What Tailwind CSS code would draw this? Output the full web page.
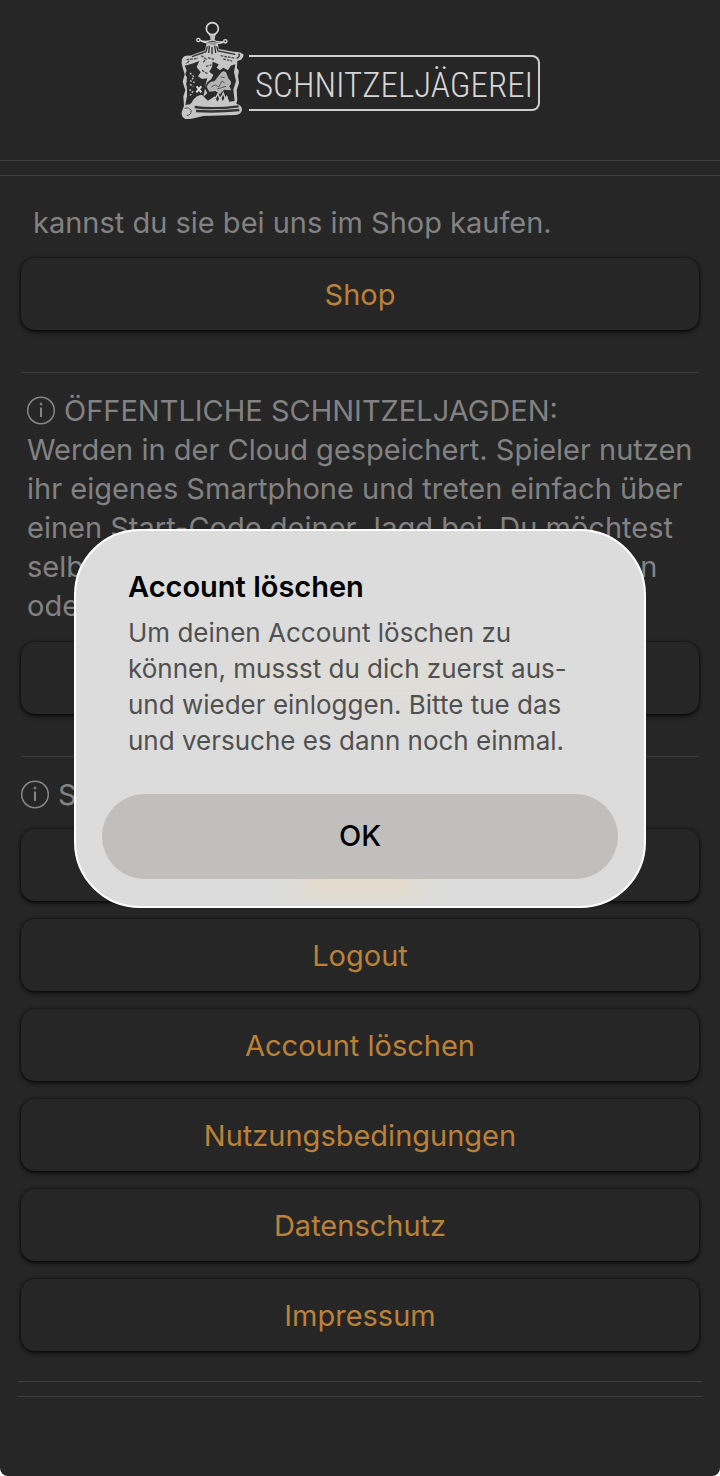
<!DOCTYPE html>
<html lang="de" class="bg-white">
<head>
  <meta charset="UTF-8">
  <meta name="viewport" content="width=device-width, initial-scale=1.0">
  <title>Schnitzeljägerei - Account</title>
  <script src="https://cdn.jsdelivr.net/npm/@tailwindcss/browser@4"></script>
  <style>
    body { font-family: Inter, 'Liberation Sans', sans-serif; }
    .logo-text { font-family: 'Roboto Condensed', 'Open Sans Condensed', 'Liberation Sans Narrow', Roboto, sans-serif; }
    .menu-btn {
      box-shadow: 0 2px 5px rgba(0,0,0,0.75), 0 0 3px rgba(0,0,0,0.6);
    }
  </style>
</head>
<body>
  <div class="min-h-screen rounded-b-lg bg-[#262626] text-[29px] leading-[39px] text-[#828282]">

    <!-- Kopfbereich mit Logo -->
    <header class="flex h-[161px] justify-center gap-1 border-b border-[#3e3e3e] pt-[21px]">
      <svg class="h-[100px] w-[65px]" viewBox="30 30 195 300" fill="none" aria-hidden="true">
        <!-- Dolch -->
        <circle cx="127" cy="53" r="18" stroke="#d6d6d6" stroke-width="5"/>
        <path d="M115 65Q127 74 139 65L136 74L118 74Z" fill="#d6d6d6"/>
        <path d="M119 72H136L134 88H122Z" fill="#bdbdbd"/>
        <path d="M90 87Q104 96 127 87Q148 96 163 91M92 90Q108 99 127 95Q148 100 160 94" stroke="#d6d6d6" stroke-width="4"/>
        <circle cx="85" cy="87" r="5" stroke="#d6d6d6" stroke-width="4"/>
        <circle cx="166" cy="91" r="5" stroke="#d6d6d6" stroke-width="4"/>
        <!-- Schatzkarte -->
        <path d="M36 144Q42 132 60 134L105 118L110 96Q126 102 144 98L146 114L190 122Q216 122 221 132Q218 148 202 150L201 172Q210 178 204 194L207 216L200 238L202 268L199 278Q216 282 216 296Q214 310 196 312L100 315Q60 326 46 324Q33 318 35 304L42 284L40 256L46 238L38 212L44 190L38 170Q32 158 36 144Z" fill="#c6c6c6"/>
        <path d="M112 106L108 122L66 137M140 106L144 120L196 130M118 104L116 126M126 108V130M134 104L137 126" stroke="#303030" stroke-width="4"/>
        <path d="M66 158L88 150L80 168L92 184L84 196L96 204L112 202L106 216L96 214L82 222L76 236L82 246L92 242L98 252L88 262L72 268L60 280L46 282L50 260L56 244L48 218L54 206L46 190L50 178L44 164Z" fill="#2b2b2b"/>
        <path d="M128 152L146 160L140 170L150 178L160 170L174 178L182 164L196 160L192 184L198 210L190 236L194 270L178 272L170 252L158 270L152 256L142 272L134 256L122 264L112 270L100 258L112 246L104 232L112 214L124 204L130 192L118 182L126 168Z" fill="#2b2b2b"/>
        <path d="M50 202L110 206L100 258L52 272Z" fill="#2b2b2b"/>
        <path d="M66 272Q80 250 96 252L112 268L116 278L66 280Z" fill="#c6c6c6"/>
        <path d="M110 228Q116 210 134 210L148 192Q158 174 168 184L176 204Q190 214 178 226L184 238L162 236L150 250L136 240L118 242Z" fill="#b4b4b4"/>
        <path d="M124 228L136 222L146 228L156 210L164 216M142 234L168 226M152 198L164 200" stroke="#555" stroke-width="3"/>
        <path d="M80 226L94 244M94 226L79 244" stroke="#e0e0e0" stroke-width="6"/>
        <path d="M60 186L72 198L62 210L74 214M58 236L68 242L60 254M60 220L70 226" stroke="#bdbdbd" stroke-width="4" stroke-dasharray="6 4"/>
        <path d="M136 262L144 248L150 266L160 246L166 264L172 256" stroke="#c8c8c8" stroke-width="4"/>
        <path d="M50 146L84 142M94 134L108 144L98 156M58 150L48 158M152 134L196 142M160 144L186 150M114 140L134 146M108 166L124 162M96 178L112 188" stroke="#4a4a4a" stroke-width="4" stroke-dasharray="8 3"/>
        <path d="M74 288Q130 296 206 286M78 300Q140 304 208 297" stroke="#333" stroke-width="7"/>
        <path d="M44 292Q56 286 64 298Q64 312 50 314" stroke="#555" stroke-width="3"/>
        <path d="M206 128Q212 136 200 142" stroke="#333" stroke-width="4"/>
      </svg>
      <div class="logo-text mt-[34px] flex h-[56px] w-[291px] items-center rounded-r-lg border-y-2 border-r-2 border-[#cfcfcf] pt-1 pl-1.5 text-[35px] font-light text-[#d6d6d6]">SCHNITZELJÄGEREI</div>
    </header>

    <main class="mt-3.5 border-t border-[#3e3e3e] px-[21px] pt-[27px]">
      <p class="px-3">kannst du sie bei uns im Shop kaufen.</p>
      <button type="button" class="menu-btn mt-4 h-[72px] w-full rounded-[14px] text-[#bb8138]">Shop</button>

      <hr class="mt-[42px] border-[#3e3e3e]">

      <div class="mt-[18px] px-1.5">
        <h2 class="flex items-center gap-2">
          <svg class="size-[29px]" viewBox="0 0 29 29" fill="none" stroke="#868686" stroke-width="1.5" aria-hidden="true">
            <circle cx="14" cy="14.500" r="13.300"/>
            <path d="M14 11.500V21" stroke-width="2"/>
            <circle cx="14" cy="8" r="1" fill="#868686" stroke-width="1"/>
          </svg>
          ÖFFENTLICHE SCHNITZELJAGDEN:
        </h2>
        <p>
          Werden in der Cloud gespeichert. Spieler nutzen<br>
          ihr eigenes Smartphone und treten einfach über<br>
          einen Start-Code deiner Jagd bei. Du möchtest<br>
          selbst Jagden online erstellen, veröffentlichen<br>
          oder bearbeiten?
        </p>
      </div>
      <button type="button" class="menu-btn mt-[17px] h-[72px] w-full rounded-[14px] text-[#bb8138]">Veröffentlichen</button>

      <hr class="mt-[42px] border-[#3e3e3e]">

      <h2 class="mt-[18px] flex items-center gap-2">
        <svg class="size-[29px]" viewBox="0 0 29 29" fill="none" stroke="#868686" stroke-width="1.5" aria-hidden="true">
          <circle cx="14" cy="14.500" r="13.300"/>
          <path d="M14 11.500V21" stroke-width="2"/>
          <circle cx="14" cy="8" r="1" fill="#868686" stroke-width="1"/>
        </svg>
        Sonstiges
      </h2>
      <nav class="mt-[15px] flex flex-col gap-[18px]">
        <button type="button" class="menu-btn h-[72px] rounded-[14px] text-[#bb8138]">Support</button>
        <button type="button" class="menu-btn h-[72px] rounded-[14px] text-[#bb8138]">Logout</button>
        <button type="button" class="menu-btn h-[72px] rounded-[14px] text-[#bb8138]">Account löschen</button>
        <button type="button" class="menu-btn h-[72px] rounded-[14px] text-[#bb8138]">Nutzungsbedingungen</button>
        <button type="button" class="menu-btn h-[72px] rounded-[14px] text-[#bb8138]">Datenschutz</button>
        <button type="button" class="menu-btn h-[72px] rounded-[14px] text-[#bb8138]">Impressum</button>
      </nav>
    </main>

    <footer class="mx-[18px] mt-[30px] h-4 border-y border-[#3e3e3e]"></footer>
  </div>

  <!-- Hinweis-Dialog -->
  <div class="fixed inset-0 flex items-center justify-center px-6 pb-10">
    <div role="alertdialog" aria-labelledby="dialog-title" aria-describedby="dialog-text" class="relative w-full max-w-[572px] overflow-hidden rounded-[66px] border-2 border-white bg-[#dcdcdc] px-[26px] pt-9 pb-[27px]">
      <div class="absolute inset-x-40 top-[132px] h-8 bg-[#e6dfce] opacity-50 blur-lg"></div>
      <div class="absolute inset-x-56 bottom-2 h-8 bg-[#e6dac4] opacity-80 blur-md"></div>
      <div class="relative">
        <div class="px-[26px]">
          <h1 id="dialog-title" class="text-[29px] leading-[40px] font-semibold text-black">Account löschen</h1>
          <p id="dialog-text" class="mt-2 text-[26px] leading-[36px] text-[#505050]">
            Um deinen Account löschen zu<br>
            können, mussst du dich zuerst aus-<br>
            und wieder einloggen. Bitte tue das<br>
            und versuche es dann noch einmal.
          </p>
        </div>
        <button type="button" class="mt-[35px] h-[85px] w-full rounded-full bg-[#bcbbba]/90 text-[29px] font-medium text-black">OK</button>
      </div>
    </div>
  </div>
</body>
</html>
